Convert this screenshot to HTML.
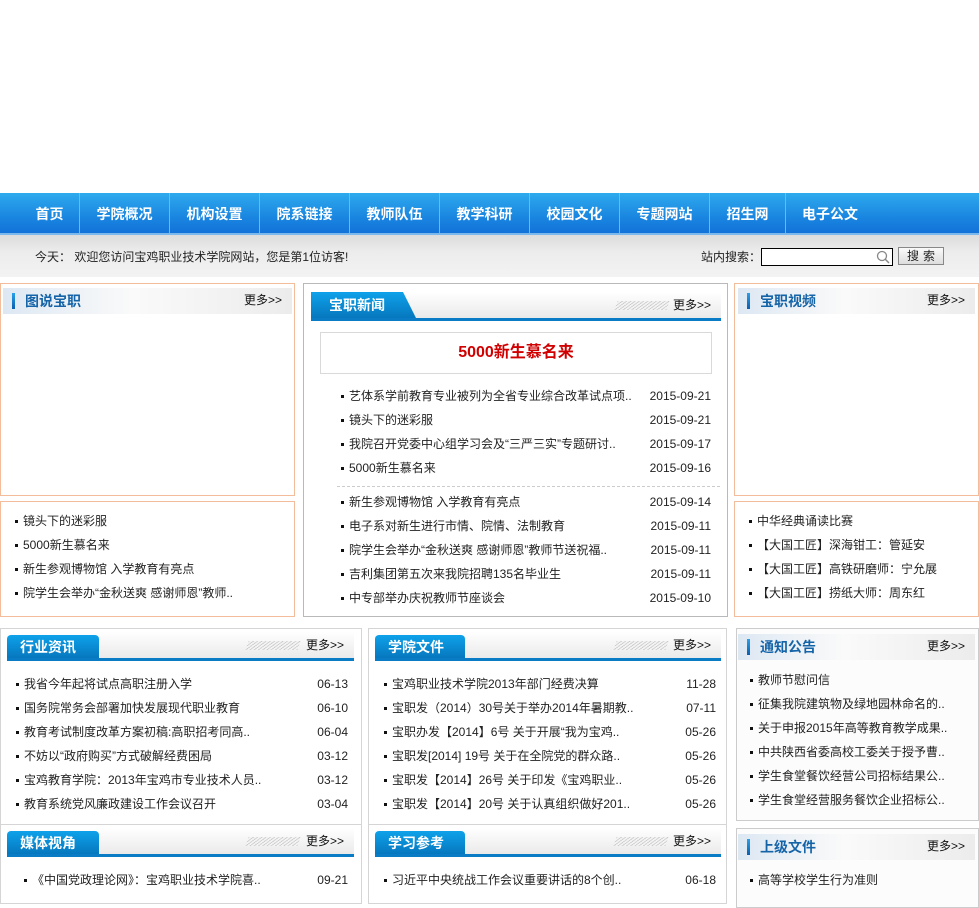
<!DOCTYPE html>
<html><head><meta charset="utf-8">
<style>
*{margin:0;padding:0;box-sizing:border-box}
body{width:979px;height:890px;overflow:hidden;background:#fff;position:relative;font-family:"Liberation Sans","Noto Sans CJK SC",sans-serif;font-size:12px;color:#222}
.a{position:absolute}
.nav{left:0;top:193px;width:979px;height:42px;background:linear-gradient(#2eaaee,#1a86e0 60%,#1272d8);border-bottom:2px solid #7bb8ec}
.nav span{position:absolute;top:0;height:40px;line-height:42px;color:#fff;font-weight:bold;font-size:14px;text-align:center}
.sep{position:absolute;top:0;width:1px;height:40px;background:#6fb7ee}
.bar{left:0;top:235px;width:979px;height:42px;background:linear-gradient(#dcdcdc,#ececec 40%,#f3f3f3)}
.box{position:absolute;border:1px solid #ccc;background:#fff}
.pe{border-color:#f3bd9c}
.lh{position:absolute;height:26px;background:linear-gradient(90deg,#dde8f3,#f4f6f8 35%,#fafafa 45%,#ececec)}
.lh i{position:absolute;left:9px;top:5px;width:3px;height:16px;background:linear-gradient(#2aa0e8,#0a5fb0)}
.lh b{position:absolute;left:22px;top:0;line-height:26px;color:#1564a8;font-size:14px}
.lh em{position:absolute;right:10px;top:0;line-height:24px;font-style:normal;color:#111}
.th{position:absolute;height:29px;background:linear-gradient(#fff,#eaeaea);border-bottom:3px solid #0a7cc6}
.th .tab{position:absolute;left:0;top:3px;height:23px;background:linear-gradient(#0ea2ea,#0677be);color:#fff;font-weight:bold;font-size:14px;line-height:24px;padding-left:13px;border-radius:4px 4px 0 0}
.th em{position:absolute;right:10px;top:0;line-height:26px;font-style:normal;color:#111}
.th s{position:absolute;top:9px;width:52px;height:9px;background:repeating-linear-gradient(135deg,#ccc 0 1px,#f4f4f4 1px 3px);transform:skewX(-20deg)}
ul{list-style:none;position:absolute}
li{height:24px;line-height:24px;white-space:nowrap;position:relative}
li:before{content:"";position:absolute;left:-8px;top:11px;width:3px;height:3px;background:#111}
li u{position:absolute;text-decoration:none;right:0;top:0}
</style></head><body>
<div class="a nav">
<span style="left:20px;width:59px">首页</span><div class="sep" style="left:79px"></div>
<span style="left:80px;width:89px">学院概况</span><div class="sep" style="left:169px"></div>
<span style="left:170px;width:89px">机构设置</span><div class="sep" style="left:259px"></div>
<span style="left:260px;width:89px">院系链接</span><div class="sep" style="left:349px"></div>
<span style="left:350px;width:89px">教师队伍</span><div class="sep" style="left:439px"></div>
<span style="left:440px;width:89px">教学科研</span><div class="sep" style="left:529px"></div>
<span style="left:530px;width:89px">校园文化</span><div class="sep" style="left:619px"></div>
<span style="left:620px;width:89px">专题网站</span><div class="sep" style="left:709px"></div>
<span style="left:710px;width:75px">招生网</span><div class="sep" style="left:785px"></div>
<span style="left:786px;width:88px">电子公文</span>
</div>
<div class="a bar">
<div class="a" style="left:35px;top:13px">今天： 欢迎您访问宝鸡职业技术学院网站，您是第1位访客!</div>
<div class="a" style="left:701px;top:13px">站内搜索：</div>
<div class="a" style="left:761px;top:13px;width:132px;height:18px;border:1px solid #000;background:#fff"><svg class="a" style="right:2px;top:1px" width="14" height="14"><circle cx="6" cy="6" r="4.5" fill="none" stroke="#888" stroke-width="1.3"/><path d="M9 9l4 4" stroke="#888" stroke-width="1.5"/></svg></div>
<div class="a" style="left:898px;top:12px;width:46px;height:18px;border:1px solid #888;background:linear-gradient(#fafafa,#ddd);text-align:center;line-height:16px;letter-spacing:4px;padding-left:4px">搜索</div>
</div>

<!-- left top -->
<div class="box pe" style="left:0;top:283px;width:295px;height:213px"></div>
<div class="lh" style="left:3px;top:288px;width:289px"><i></i><b>图说宝职</b><em>更多&gt;&gt;</em></div>
<div class="box pe" style="left:0;top:501px;width:295px;height:116px"></div>
<ul style="left:23px;top:509px"><li>镜头下的迷彩服</li><li>5000新生慕名来</li><li>新生参观博物馆 入学教育有亮点</li><li>院学生会举办“金秋送爽 感谢师恩”教师..</li></ul>

<!-- middle -->
<div class="box" style="left:303px;top:283px;width:425px;height:334px;border-color:#b9b9b9"></div>
<div class="th" style="left:311px;top:292px;width:410px"><div class="tab" style="top:0;height:26px;line-height:27px;width:105px;padding-left:18px;border-radius:0;clip-path:polygon(0 0,92px 0,105px 100%,0 100%)">宝职新闻</div><s style="left:305px"></s><em>更多&gt;&gt;</em></div>
<div class="a" style="left:320px;top:332px;width:392px;height:42px;border:1px solid #d9d9d9;color:#d10000;font-weight:bold;font-size:16px;text-align:center;line-height:40px">5000新生慕名来</div>
<ul style="left:349px;top:384px;width:362px"><li>艺体系学前教育专业被列为全省专业综合改革试点项..<u>2015-09-21</u></li><li>镜头下的迷彩服<u>2015-09-21</u></li><li>我院召开党委中心组学习会及“三严三实”专题研讨..<u>2015-09-17</u></li><li>5000新生慕名来<u>2015-09-16</u></li></ul>
<div class="a" style="left:337px;top:486px;width:383px;border-top:1px dashed #ccc"></div>
<ul style="left:349px;top:490px;width:362px"><li>新生参观博物馆 入学教育有亮点<u>2015-09-14</u></li><li>电子系对新生进行市情、院情、法制教育<u>2015-09-11</u></li><li>院学生会举办“金秋送爽 感谢师恩”教师节送祝福..<u>2015-09-11</u></li><li>吉利集团第五次来我院招聘135名毕业生<u>2015-09-11</u></li><li>中专部举办庆祝教师节座谈会<u>2015-09-10</u></li></ul>

<!-- right top -->
<div class="box pe" style="left:734px;top:283px;width:245px;height:213px"></div>
<div class="lh" style="left:738px;top:288px;width:237px"><i></i><b>宝职视频</b><em>更多&gt;&gt;</em></div>
<div class="box pe" style="left:734px;top:501px;width:245px;height:116px"></div>
<ul style="left:757px;top:509px"><li>中华经典诵读比赛</li><li>【大国工匠】深海钳工：管延安</li><li>【大国工匠】高铁研磨师：宁允展</li><li>【大国工匠】捞纸大师：周东红</li></ul>

<!-- row 2 -->
<div class="box" style="left:0;top:628px;width:362px;height:197px;border-color:#d5d5d5"></div>
<div class="th" style="left:7px;top:632px;width:347px"><div class="tab" style="width:92px">行业资讯</div><s style="left:240px"></s><em>更多&gt;&gt;</em></div>
<ul style="left:24px;top:672px;width:324px"><li>我省今年起将试点高职注册入学<u>06-13</u></li><li>国务院常务会部署加快发展现代职业教育<u>06-10</u></li><li>教育考试制度改革方案初稿:高职招考同高..<u>06-04</u></li><li>不妨以“政府购买”方式破解经费困局<u>03-12</u></li><li>宝鸡教育学院：2013年宝鸡市专业技术人员..<u>03-12</u></li><li>教育系统党风廉政建设工作会议召开<u>03-04</u></li></ul>

<div class="box" style="left:368px;top:628px;width:359px;height:197px;border-color:#d5d5d5"></div>
<div class="th" style="left:375px;top:632px;width:346px"><div class="tab" style="width:90px">学院文件</div><s style="left:240px"></s><em>更多&gt;&gt;</em></div>
<ul style="left:392px;top:672px;width:324px"><li>宝鸡职业技术学院2013年部门经费决算<u>11-28</u></li><li>宝职发（2014）30号关于举办2014年暑期教..<u>07-11</u></li><li>宝职办发【2014】6号 关于开展“我为宝鸡..<u>05-26</u></li><li>宝职发[2014] 19号 关于在全院党的群众路..<u>05-26</u></li><li>宝职发【2014】26号 关于印发《宝鸡职业..<u>05-26</u></li><li>宝职发【2014】20号 关于认真组织做好201..<u>05-26</u></li></ul>

<div class="box" style="left:736px;top:628px;width:243px;height:193px;border-color:#ccc;background:#fcfcfc"></div>
<div class="lh" style="left:738px;top:634px;width:237px"><i></i><b>通知公告</b><em>更多&gt;&gt;</em></div>
<ul style="left:758px;top:668px"><li>教师节慰问信</li><li>征集我院建筑物及绿地园林命名的..</li><li>关于申报2015年高等教育教学成果..</li><li>中共陕西省委高校工委关于授予曹..</li><li>学生食堂餐饮经营公司招标结果公..</li><li>学生食堂经营服务餐饮企业招标公..</li></ul>

<!-- row 3 -->
<div class="box" style="left:0;top:824px;width:362px;height:80px;border-color:#d5d5d5"></div>
<div class="th" style="left:7px;top:828px;width:347px"><div class="tab" style="width:92px">媒体视角</div><s style="left:240px"></s><em>更多&gt;&gt;</em></div>
<ul style="left:32px;top:868px;width:316px"><li>《中国党政理论网》：宝鸡职业技术学院喜..<u>09-21</u></li></ul>
<div class="box" style="left:368px;top:824px;width:359px;height:80px;border-color:#d5d5d5"></div>
<div class="th" style="left:375px;top:828px;width:346px"><div class="tab" style="width:90px">学习参考</div><s style="left:240px"></s><em>更多&gt;&gt;</em></div>
<ul style="left:392px;top:868px;width:324px"><li>习近平中央统战工作会议重要讲话的8个创..<u>06-18</u></li></ul>
<div class="box" style="left:736px;top:828px;width:243px;height:80px;border-color:#ccc;background:#fcfcfc"></div>
<div class="lh" style="left:738px;top:834px;width:237px"><i></i><b>上级文件</b><em>更多&gt;&gt;</em></div>
<ul style="left:758px;top:868px"><li>高等学校学生行为准则</li></ul>
</body></html>
